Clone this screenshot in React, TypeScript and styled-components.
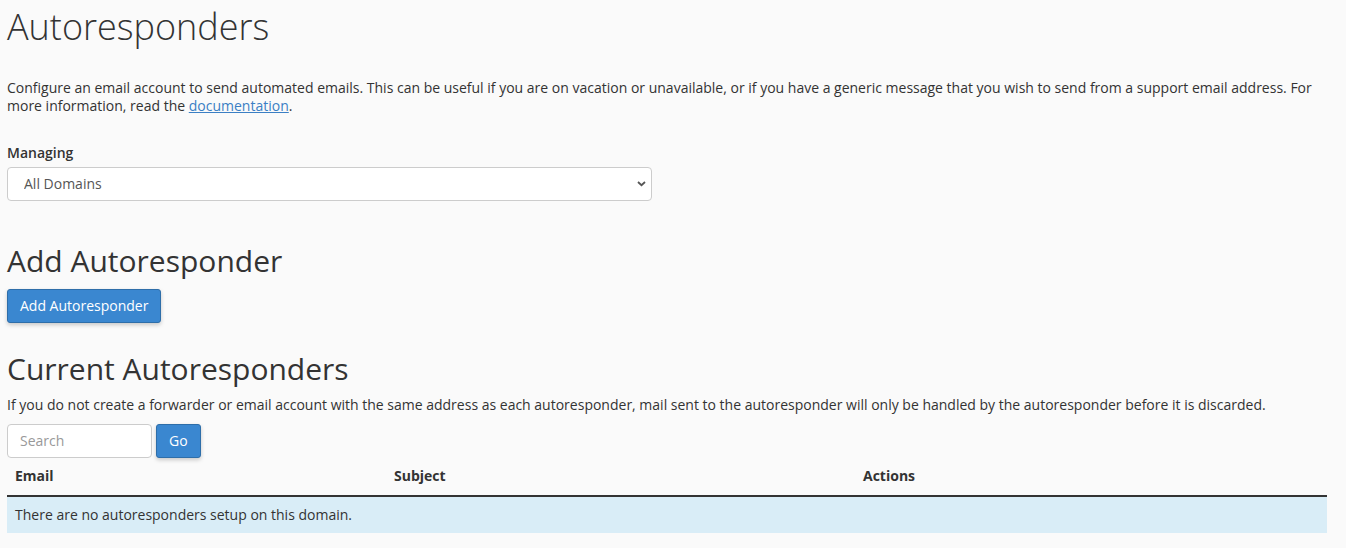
import React from "react";
import styled, { createGlobalStyle } from "styled-components";

const GlobalStyle = createGlobalStyle`
  html, body {
    margin: 0;
    padding: 0;
    background: #fafafa;
  }
  body {
    font-family: "Open Sans", "Liberation Sans", sans-serif;
    font-size: 14px;
    line-height: 1.42857;
    color: #333333;
  }
  * {
    box-sizing: border-box;
  }
`;

const Page = styled.main`
  padding: 6px 19px 20px 7px;
`;

const Title = styled.h1`
  margin: 0;
  font-size: 36px;
  font-weight: 300;
  line-height: 42px;
  color: #333;
`;

const Intro = styled.p`
  margin: 31px 0 0;
  line-height: 18px;
`;

const DocLink = styled.a`
  color: #3b7fc4;
  text-decoration: underline;
`;

const Field = styled.div`
  margin-top: 28px;
  width: 645px;
`;

const Label = styled.label`
  display: block;
  font-weight: 600;
  margin-bottom: 4px;
`;

const SelectWrap = styled.div`
  position: relative;
`;

const Select = styled.select`
  appearance: none;
  width: 100%;
  height: 34px;
  padding: 6px 12px 6px 16px;
  font: inherit;
  color: #555;
  background: #fff;
  border: 1px solid #ccc;
  border-radius: 4px;
`;

const Chevron = styled.svg`
  position: absolute;
  right: 6px;
  top: 14px;
  pointer-events: none;
`;

const SectionTitle = styled.h2<{ $top: number }>`
  margin: ${(p) => p.$top}px 0 0;
  font-size: 30px;
  font-weight: 400;
  line-height: 36px;
  color: #333;
`;

const Button = styled.button`
  font: inherit;
  color: #fff;
  background: #3a87d0;
  border: 1px solid #2e6ea9;
  border-radius: 3px;
  box-shadow: 0 2px 4px rgba(0, 0, 0, 0.2);
  padding: 6px 12px;
  line-height: 20px;
  cursor: pointer;
`;

const AddRow = styled.div`
  margin-top: 10px;
`;

const Note = styled.p`
  margin: 8px 0 0;
  line-height: 20px;
`;

const SearchRow = styled.form`
  display: flex;
  gap: 4px;
  margin-top: 9px;
`;

const SearchInput = styled.input`
  width: 145px;
  height: 34px;
  padding: 6px 12px;
  font: inherit;
  color: #555;
  background: #fff;
  border: 1px solid #ccc;
  border-radius: 4px;
  &::placeholder {
    color: #999;
  }
`;

const Table = styled.table`
  width: 100%;
  border-collapse: collapse;
`;

const Th = styled.th`
  text-align: left;
  font-weight: 700;
  padding: 8px 8px 9px;
  line-height: 20px;
  border-bottom: 2px solid #333;
`;

const EmptyCell = styled.td`
  padding: 8px;
  line-height: 20px;
  background: #d9edf7;
`;

export default function App() {
  return (
    <>
      <GlobalStyle />
      <Page>
        <Title>Autoresponders</Title>
        <Intro>
          Configure an email account to send automated emails. This can be useful if you are on
          vacation or unavailable, or if you have a generic message that you wish to send from a
          support email address. For more information, read the{" "}
          <DocLink href="#">documentation</DocLink>.
        </Intro>

        <Field>
          <Label htmlFor="domain">Managing</Label>
          <SelectWrap>
            <Select id="domain" defaultValue="all">
              <option value="all">All Domains</option>
            </Select>
            <Chevron width="9" height="6" viewBox="0 0 9 6">
              <path d="M1 1l3.5 3.2L8 1" fill="none" stroke="#555" strokeWidth="1.8" />
            </Chevron>
          </SelectWrap>
        </Field>

        <SectionTitle $top={42}>Add Autoresponder</SectionTitle>
        <AddRow>
          <Button type="button">Add Autoresponder</Button>
        </AddRow>

        <SectionTitle $top={28}>Current Autoresponders</SectionTitle>
        <Note>
          If you do not create a forwarder or email account with the same address as each
          autoresponder, mail sent to the autoresponder will only be handled by the autoresponder
          before it is discarded.
        </Note>
        <SearchRow onSubmit={(e) => e.preventDefault()}>
          <SearchInput placeholder="Search" />
          <Button type="submit">Go</Button>
        </SearchRow>

        <Table>
          <colgroup>
            <col style={{ width: 379 }} />
            <col style={{ width: 469 }} />
            <col />
          </colgroup>
          <thead>
            <tr>
              <Th>Email</Th>
              <Th>Subject</Th>
              <Th>Actions</Th>
            </tr>
          </thead>
          <tbody>
            <tr>
              <EmptyCell colSpan={3}>There are no autoresponders setup on this domain.</EmptyCell>
            </tr>
          </tbody>
        </Table>
      </Page>
    </>
  );
}
